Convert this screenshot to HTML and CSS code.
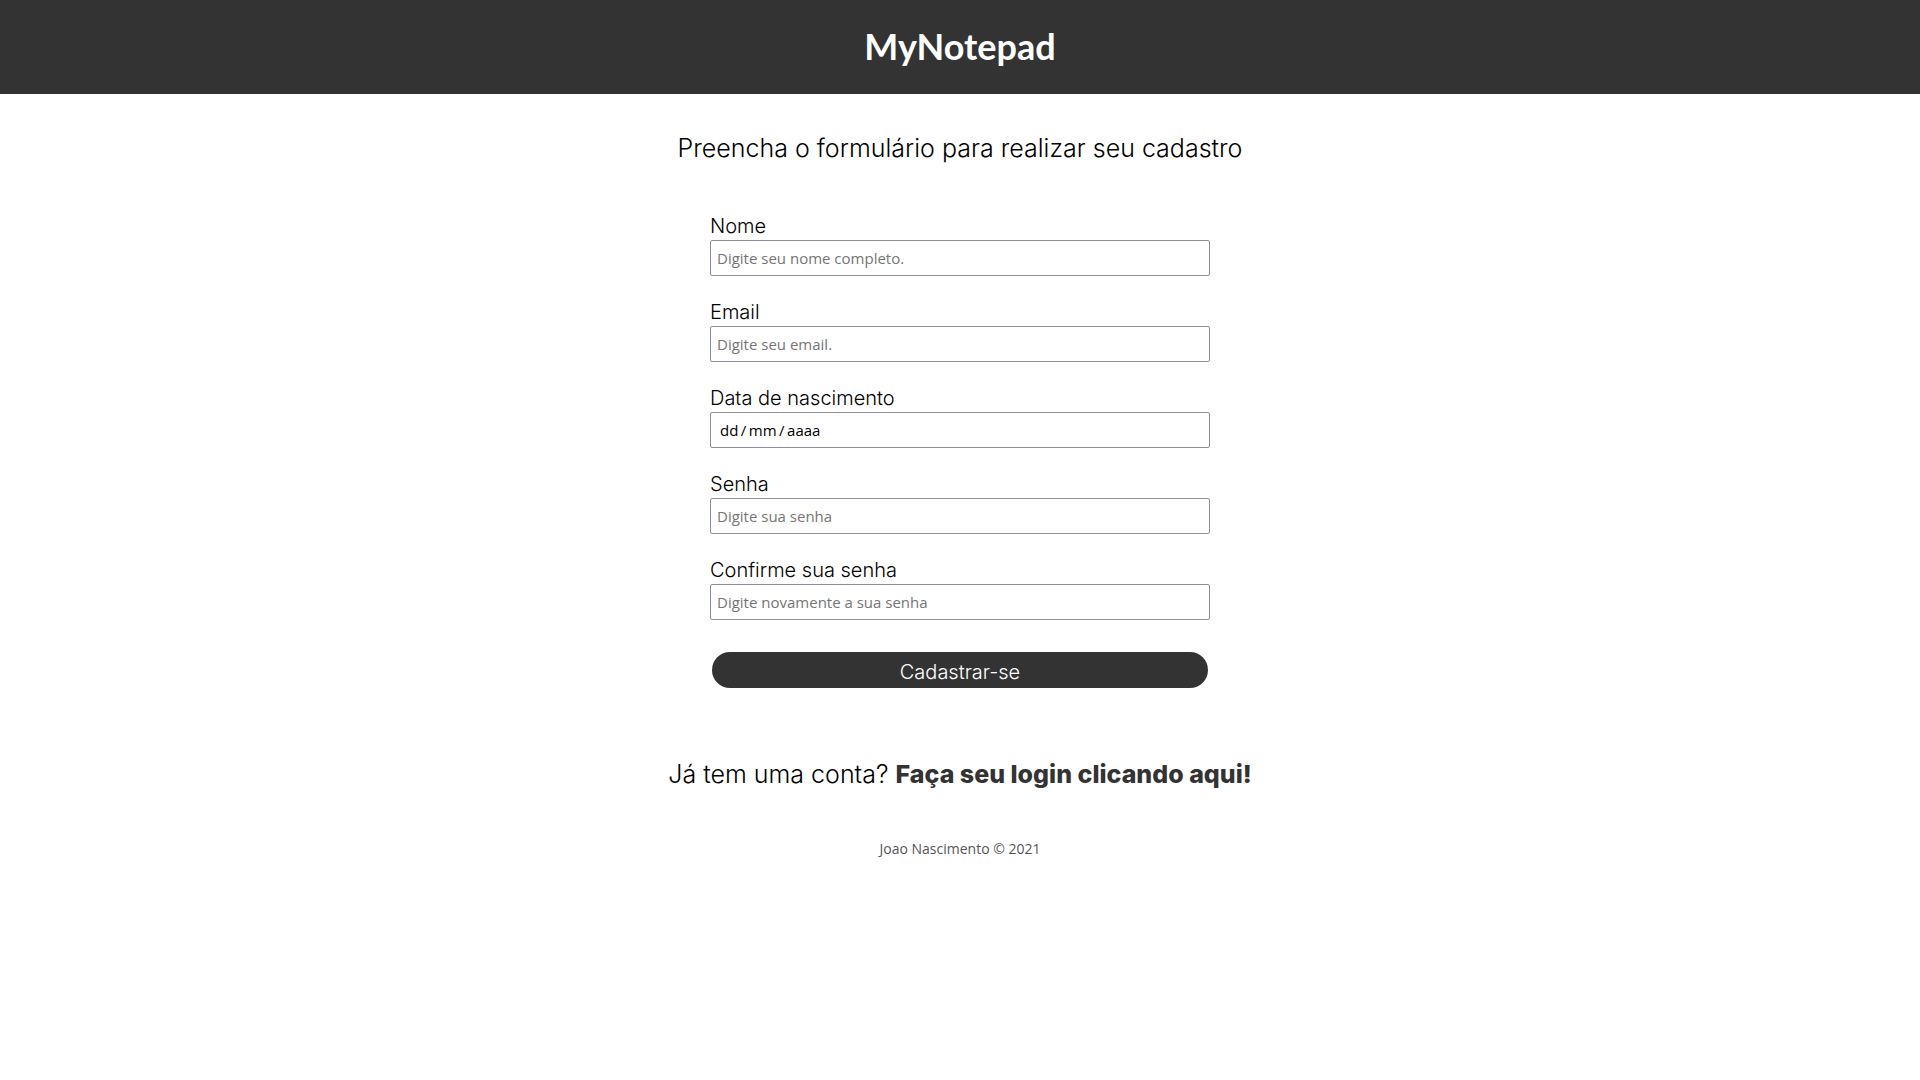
FILE: index.html
```
<!DOCTYPE html>
<html lang="pt-BR">
<head>
<meta charset="utf-8">
<meta name="viewport" content="width=device-width, initial-scale=1">
<title>MyNotepad</title>
<link rel="stylesheet" href="styles.css">
</head>
<body>
<header class="site-header">
  <h1 class="logo">MyNotepad</h1>
</header>
<main class="content">
  <h2 class="lead">Preencha o formulário para realizar seu cadastro</h2>
  <form class="form">
    <div class="field">
      <label for="nome">Nome</label>
      <input id="nome" type="text" placeholder="Digite seu nome completo.">
    </div>
    <div class="field">
      <label for="email">Email</label>
      <input id="email" type="email" placeholder="Digite seu email.">
    </div>
    <div class="field">
      <label for="nascimento">Data de nascimento</label>
      <input id="nascimento" class="date" type="text" inputmode="numeric" placeholder="dd&#8201;/&#8201;mm&#8201;/&#8201;aaaa">
    </div>
    <div class="field">
      <label for="senha">Senha</label>
      <input id="senha" type="password" placeholder="Digite sua senha">
    </div>
    <div class="field">
      <label for="confirma">Confirme sua senha</label>
      <input id="confirma" type="password" placeholder="Digite novamente a sua senha">
    </div>
    <button class="submit" type="submit">Cadastrar-se</button>
  </form>
  <p class="lead">Já tem uma conta? <a class="login" href="#login">Faça seu login clicando aqui!</a></p>
</main>
<footer class="site-footer">Joao Nascimento © 2021</footer>
</body>
</html>
```
FILE: styles.css
```
* {
  box-sizing: border-box;
}

body {
  margin: 0;
  background: #fff;
  color: #000;
  font-family: Inter, "Open Sans", sans-serif;
  font-weight: 300;
}

.site-header {
  padding: 22px 16px 24px;
  background: #333;
  color: #fff;
  text-align: center;
}

.logo {
  margin: 0;
  font-family: Lato, sans-serif;
  font-size: 36px;
  font-weight: 700;
  line-height: 48px;
}

.content {
  display: flex;
  flex-direction: column;
  align-items: center;
  padding: 38px 16px 0;
}

.lead {
  margin: 0;
  font-size: 25px;
  font-weight: 300;
  line-height: 32px;
  text-align: center;
}

.form {
  display: flex;
  flex-direction: column;
  gap: 22px;
  width: 100%;
  max-width: 500px;
  margin: 48px 0 70px;
}

.field {
  display: flex;
  flex-direction: column;
}

.field label {
  font-size: 20px;
  line-height: 28px;
}

.field input {
  height: 36px;
  padding: 0 6px;
  border: 1px solid #8f8f9d;
  border-radius: 2px;
  background: #fff;
  font-family: "Open Sans", sans-serif;
  font-size: 15px;
}

.field input::placeholder {
  color: #757575;
}

.field .date {
  padding: 0 9px;
}

.field .date::placeholder {
  color: #000;
}

.submit {
  height: 36px;
  margin: 10px 2px 0;
  padding: 4px 0 0;
  border: 0;
  border-radius: 18px;
  background: #333;
  color: #fff;
  font-family: inherit;
  font-size: 20px;
  font-weight: 300;
}

.login {
  color: #333;
  font-weight: 800;
  text-decoration: none;
}

.site-footer {
  padding: 48px 16px 16px;
  color: #555;
  font-family: "Open Sans", sans-serif;
  font-size: 14px;
  font-weight: 400;
  line-height: 22px;
  text-align: center;
}
```
